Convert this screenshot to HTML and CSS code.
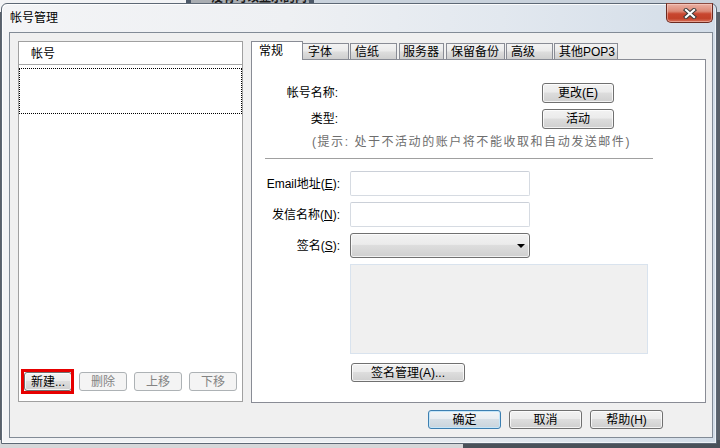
FILE: index.html
```html
<!DOCTYPE html>
<html lang="zh-CN">
<head>
<meta charset="utf-8">
<title>帐号管理</title>
<link rel="stylesheet" href="styles.css">
</head>
<body>
<div class="desktop">
  <div class="bg-top">
    <div class="seg seg-a"></div>
    <div class="seg seg-b"></div>
    <div class="seg seg-c"><span class="bg-text">没有可以显示的内容</span></div>
    <div class="seg seg-b"></div>
    <div class="seg seg-d"></div>
  </div>
  <div class="bg-bottom">
    <div class="bb-a"></div>
    <div class="bb-b"></div>
  </div>

  <div class="window">
    <div class="titlebar">
      <span class="title">帐号管理</span>
      <button class="close" aria-label="关闭">
        <svg width="14" height="11" viewBox="0 0 14 11">
          <path d="M3 2 L11 9 M11 2 L3 9" stroke="#3b3b3b" stroke-width="4.2" stroke-linecap="square" fill="none"/>
          <path d="M3 2 L11 9 M11 2 L3 9" stroke="#ffffff" stroke-width="2.2" stroke-linecap="square" fill="none"/>
        </svg>
      </button>
    </div>

    <div class="client">
      <div class="main">
        <div class="accounts">
          <div class="acc-header">帐号</div>
          <div class="acc-list">
            <div class="acc-item"></div>
          </div>
          <div class="acc-buttons">
            <button class="btn btn-acc highlight">新建...</button>
            <button class="btn btn-acc" disabled>删除</button>
            <button class="btn btn-acc" disabled>上移</button>
            <button class="btn btn-acc" disabled>下移</button>
          </div>
        </div>

        <div class="tabs">
          <div class="tab-strip">
            <div class="tab active t-general">常规</div>
            <div class="tab t-font">字体</div>
            <div class="tab t-paper">信纸</div>
            <div class="tab t-server">服务器</div>
            <div class="tab t-backup">保留备份</div>
            <div class="tab t-adv">高级</div>
            <div class="tab t-pop">其他POP3</div>
          </div>
          <div class="tab-panel">
            <div class="info-row first">
              <span class="info-label">帐号名称:</span>
              <button class="btn btn-side">更改(E)</button>
            </div>
            <div class="info-row">
              <span class="info-label">类型:</span>
              <button class="btn btn-side">活动</button>
            </div>
            <div class="hint">(提示: 处于不活动的账户将不能收取和自动发送邮件)</div>
            <div class="separator"></div>

            <div class="field-row first">
              <span class="field-label">Email地址(<u>E</u>):</span>
              <div class="textbox"></div>
            </div>
            <div class="field-row">
              <span class="field-label">发信名称(<u>N</u>):</span>
              <div class="textbox"></div>
            </div>
            <div class="field-row">
              <span class="field-label">签名(<u>S</u>):</span>
              <div class="combo"><span class="arrow"></span></div>
            </div>
            <div class="preview"></div>
            <button class="btn btn-sig">签名管理(A)...</button>
          </div>
        </div>
      </div>

      <div class="dialog-buttons">
        <button class="btn btn-dlg default">确定</button>
        <button class="btn btn-dlg">取消</button>
        <button class="btn btn-dlg">帮助(H)</button>
      </div>
    </div>
  </div>
</div>
</body>
</html>
```
FILE: styles.css
```css
* { box-sizing: border-box; }
html, body { margin: 0; padding: 0; }
body {
  width: 720px;
  height: 448px;
  overflow: hidden;
  font-family: "Liberation Sans", "Noto Sans CJK SC", sans-serif;
  font-size: 12px;
  line-height: 14px;
  color: #000;
  background: #5a616a;
}
.desktop { position: relative; width: 720px; height: 448px; overflow: hidden; }

/* windows behind */
.bg-top {
  position: absolute; left: 0; top: 0; width: 720px; height: 12px;
  display: flex;
}
.seg { height: 12px; }
.seg-a { width: 186px; background: #f2f3f5; }
.seg-b { width: 5px; background: #4c5868; }
.seg-c { width: 118px; background: #a9adb2; overflow: hidden; position: relative; }
.seg-d { flex: 1; background: #c9d2dc; }
.bg-text {
  position: absolute; left: 20px; top: -9px;
  font-weight: bold; color: #1b1b1b; white-space: nowrap;
}
.bg-bottom {
  position: absolute; left: 0; bottom: 0; width: 720px; height: 8px;
  display: flex;
}
.bb-a { width: 463px; background: #d6d7d9; }
.bb-b { flex: 1; background: #4a5159; }

/* dialog window */
.window {
  position: absolute; left: 1px; top: 3px;
  width: 716px; height: 441px;
  border: 1px solid #5d6875;
  border-radius: 6px 6px 0 0;
  background: linear-gradient(to right, #f3f4f6 0%, #eef0f3 40%, #e2e8ef 70%, #d3dde8 100%);
  box-shadow: inset 1px 1px 0 rgba(255,255,255,0.85), inset -1px -1px 0 rgba(255,255,255,0.6);
  display: flex;
  flex-direction: column;
}
.titlebar {
  height: 28px;
  display: flex;
  align-items: flex-start;
}
.title {
  margin: 7px 0 0 8px;
  line-height: 14px;
  color: #000;
  text-shadow: 0 0 6px #fff;
}
.close {
  margin: -1px 3px 0 auto;
  width: 47px; height: 20px;
  padding: 0;
  border: 1px solid #6b2a20;
  border-top-color: #8a4a40;
  border-radius: 0 0 5px 5px;
  background: linear-gradient(#eab0a3 0%, #dc8a77 40%, #c8462f 55%, #c24129 80%, #d8735c 100%);
  box-shadow: inset 0 0 0 1px rgba(255,220,210,0.45);
  display: flex; align-items: center; justify-content: center;
}
.close svg { display: block; margin-top: 1px; }

.client {
  flex: 1;
  margin: 0 3px 5px 7px;
  border: 1px solid #828b96;
  background: #f0f0f0;
  padding: 8px 6px 0 8px;
  display: flex;
  flex-direction: column;
}
.main {
  height: 362px;
  display: flex;
  gap: 8px;
}

/* accounts list */
.accounts {
  width: 225px;
  height: 361px;
  border: 1px solid #a0a0a0;
  background: #fff;
  display: flex;
  flex-direction: column;
}
.acc-header {
  height: 23px;
  border-bottom: 1px solid #a5a5a5;
  padding: 5px 0 0 12px;
  line-height: 14px;
}
.acc-list { padding-top: 3px; }
.acc-item {
  height: 46px;
  border: 1px dotted #000;
}
.acc-buttons {
  margin-top: auto;
  display: flex;
  gap: 7px;
  padding: 0 0 10px 5px;
}

/* buttons */
.btn {
  font: inherit;
  line-height: 14px;
  margin: 0;
  padding: 0;
  height: 19px;
  border: 1px solid #707070;
  border-radius: 3px;
  background: linear-gradient(#f2f2f2 0%, #ebebeb 45%, #dddddd 50%, #cfcfcf 100%);
  box-shadow: inset 0 0 0 1px rgba(255,255,255,0.75);
  color: #000;
  display: flex;
  align-items: center;
  justify-content: center;
}
.btn:disabled {
  border-color: #adb2b5;
  background: #f4f4f4;
  box-shadow: none;
  color: #838383;
}
.btn-acc { width: 48px; }
.highlight { position: relative; }
.highlight::after {
  content: "";
  position: absolute;
  left: -4px; top: -4px; right: -3px; bottom: -4px;
  border: 3px solid #e60000;
}
.btn-side { width: 72px; height: 20px; margin-left: 204px; }
.btn-sig { width: 114px; margin: 9px 0 0 99px; }
.btn-dlg { width: 73px; }
.btn.default {
  border-color: #3c7fb1;
  box-shadow: inset 0 0 0 1px #c5e6f9;
  background: linear-gradient(#f2f5f7 0%, #e9eef2 45%, #d6dfe6 50%, #c9d4dc 100%);
}

/* tabs */
.tabs {
  width: 455px;
  display: flex;
  flex-direction: column;
}
.tab-strip {
  height: 18px;
  display: flex;
  align-items: flex-end;
}
.tab {
  height: 16px;
  border: 1px solid #898c95;
  border-bottom: none;
  background: linear-gradient(#f3f3f3 0%, #ebebeb 45%, #dddddd 55%, #cfcfcf 100%);
  padding: 1px 0 0 4px;
  line-height: 14px;
  white-space: nowrap;
}
.tab.active {
  height: 19px;
  margin-bottom: -1px;
  background: #fff;
  position: relative;
  z-index: 1;
  padding: 2px 0 0 7px;
}
.t-general { width: 52px; }
.t-font { width: 47px; margin-left: -1px; padding-left: 5px; }
.t-paper { width: 47px; margin-left: 1px; }
.t-server { width: 45px; margin-left: 2px; padding-left: 3px; }
.t-backup { width: 59px; margin-left: 2px; }
.t-adv { width: 47px; margin-left: 1px; }
.t-pop { width: 64px; margin-left: 1px; }

.tab-panel {
  height: 344px;
  border: 1px solid #898c95;
  background: #fff;
  display: flex;
  flex-direction: column;
  align-items: flex-start;
}
.info-row {
  display: flex;
  align-items: center;
  height: 20px;
  margin-top: 6px;
}
.info-row.first { margin-top: 23px; }
.info-label { width: 86px; text-align: right; }
.hint {
  margin: 6px 0 0 60px;
  color: #6d6d6d;
  letter-spacing: 1.55px;
  white-space: nowrap;
}
.separator {
  margin: 9px 0 0 13px;
  width: 388px;
  height: 1px;
  background: #a0a0a0;
}
.field-row {
  display: flex;
  align-items: center;
  height: 25px;
  margin-top: 6px;
}
.field-row.first { margin-top: 12px; }
.field-label { width: 88px; text-align: right; margin-right: 10px; white-space: nowrap; }
.textbox {
  width: 180px; height: 25px;
  border: 1px solid #d6dbe2;
  border-top-color: #cbd0d8;
  border-radius: 2px;
  background: #fff;
}
.combo {
  width: 180px; height: 25px;
  border: 1px solid #707070;
  border-radius: 3px;
  background: linear-gradient(#f2f2f2 0%, #ebebeb 45%, #dddddd 50%, #cfcfcf 100%);
  box-shadow: inset 0 0 0 1px rgba(255,255,255,0.7);
  display: flex;
  align-items: center;
  justify-content: flex-end;
  padding: 0 4px 0 0;
}
.arrow {
  width: 0; height: 0;
  border-left: 4px solid transparent;
  border-right: 4px solid transparent;
  border-top: 4px solid #000;
  margin-top: 1px;
}
.preview {
  margin: 6px 0 0 98px;
  width: 298px;
  height: 90px;
  border: 1px solid #d9e3ee;
  background: #f0f0f0;
}

.dialog-buttons {
  margin-top: 7px;
  display: flex;
  justify-content: flex-end;
  gap: 8px;
  padding-right: 43px;
}
```
